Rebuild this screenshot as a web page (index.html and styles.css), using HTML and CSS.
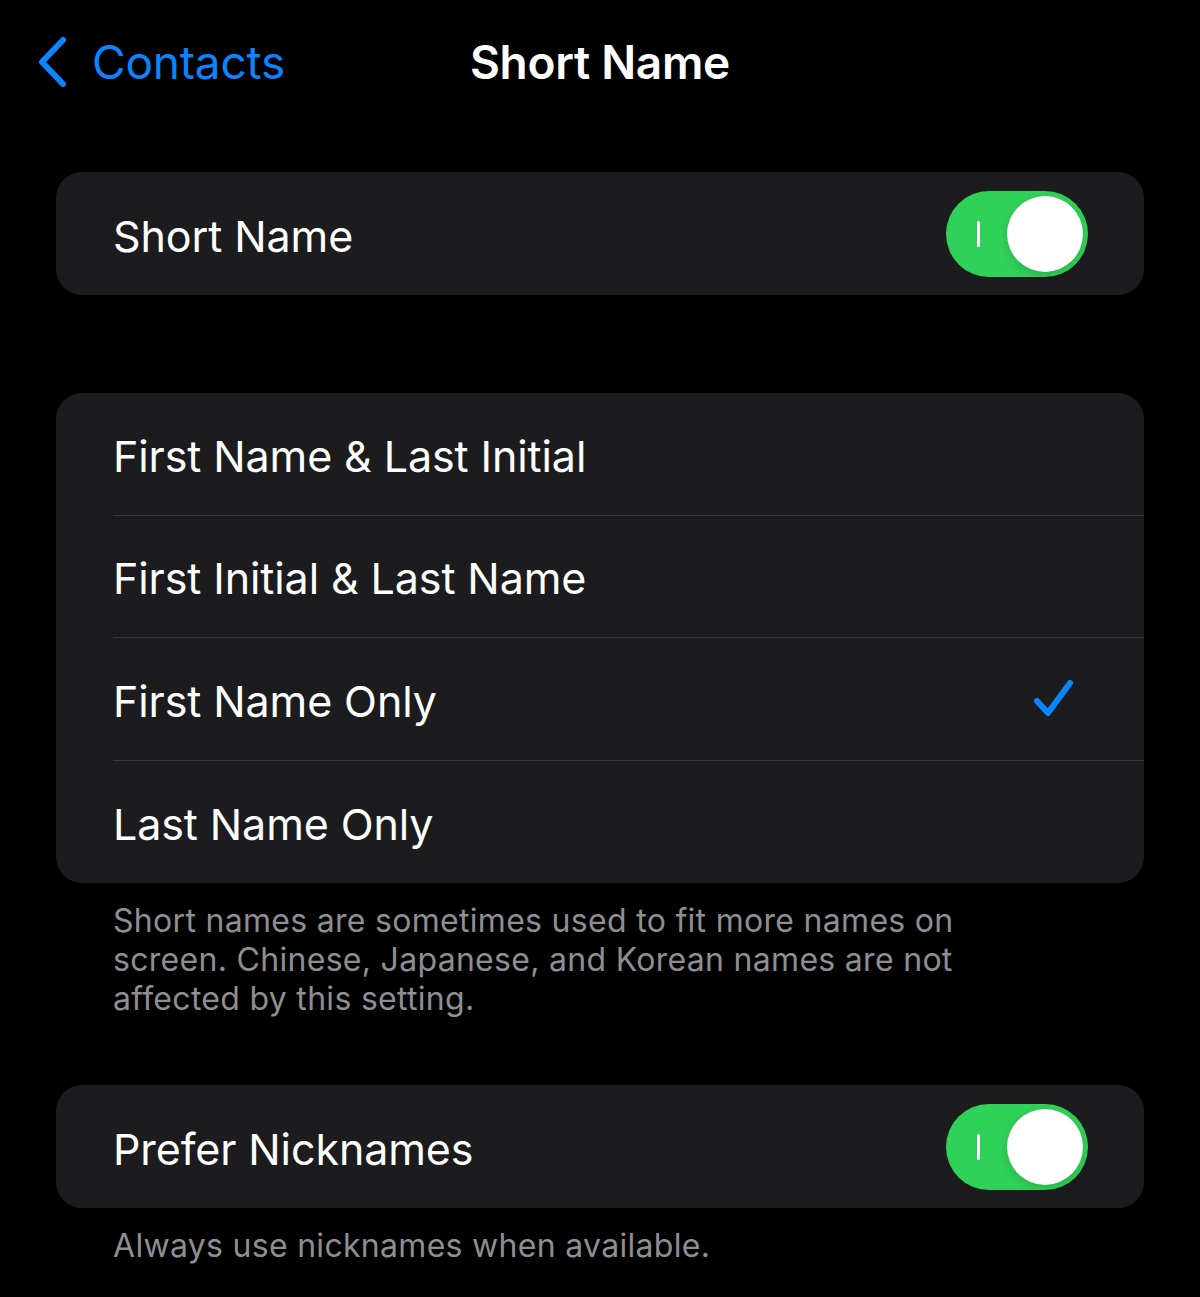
FILE: index.html
```html
<!DOCTYPE html>
<html lang="en">
<head>
<meta charset="utf-8">
<title>Short Name</title>
<link rel="stylesheet" href="styles.css">
</head>
<body>
<header class="nav">
  <a class="back" href="#">
    <svg class="chev" viewBox="0 0 32 52" width="32" height="52" aria-hidden="true">
      <path d="M27 4 L6 26 L27 48" fill="none" stroke="#0a84ff" stroke-width="6" stroke-linecap="round" stroke-linejoin="round"/>
    </svg>
    <span>Contacts</span>
  </a>
  <h1 class="title">Short Name</h1>
</header>

<main class="content">
  <section class="group">
    <div class="row">
      <div class="row-inner">
        <span class="label">Short Name</span>
        <span class="switch on"><span class="switch-mark"></span><span class="knob"></span></span>
      </div>
    </div>
  </section>

  <section class="group group-list">
    <div class="row"><div class="row-inner sep"><span class="label">First Name &amp; Last Initial</span></div></div>
    <div class="row"><div class="row-inner sep"><span class="label">First Initial &amp; Last Name</span></div></div>
    <div class="row"><div class="row-inner sep">
      <span class="label">First Name Only</span>
      <svg class="check" viewBox="0 0 44 42" width="44" height="42" aria-hidden="true">
        <path d="M5 23 L16 35 L38 5" fill="none" stroke="#0a84ff" stroke-width="6" stroke-linecap="round" stroke-linejoin="round"/>
      </svg>
    </div></div>
    <div class="row"><div class="row-inner"><span class="label">Last Name Only</span></div></div>
  </section>
  <p class="footnote">Short names are sometimes used to fit more names on screen. Chinese, Japanese, and Korean names are not affected by this setting.</p>

  <section class="group group-nick">
    <div class="row">
      <div class="row-inner">
        <span class="label">Prefer Nicknames</span>
        <span class="switch on"><span class="switch-mark"></span><span class="knob"></span></span>
      </div>
    </div>
  </section>
  <p class="footnote">Always use nicknames when available.</p>
</main>
</body>
</html>
```

FILE: styles.css
```css
* { box-sizing: border-box; }

html, body {
  margin: 0;
  padding: 0;
  background: #000;
}

body {
  font-family: Inter, "Noto Sans", sans-serif;
  color: #fff;
  width: 1200px;
  height: 1297px;
  overflow: hidden;
}

/* navigation bar */
.nav {
  position: relative;
  height: 124px;
  display: flex;
  align-items: center;
  justify-content: center;
}

.back {
  position: absolute;
  left: 36px;
  top: 36px;
  display: flex;
  align-items: center;
  gap: 24px;
  color: #0a84ff;
  text-decoration: none;
  font-size: 46px;
  letter-spacing: -0.2px;
}

.back span {
  line-height: 52px;
}

.title {
  margin: 0;
  font-size: 46px;
  font-weight: 600;
  letter-spacing: -0.3px;
}

/* grouped lists */
.content {
  padding: 48px 56px 0;
}

.group {
  background: #1c1c1e;
  border-radius: 26px;
  overflow: hidden;
}

.group-list {
  margin-top: 98px;
}

.group-nick {
  margin-top: 67px;
}

.row {
  padding-left: 57px;
}

.row-inner {
  height: 123px;
  padding-right: 56px;
  display: flex;
  align-items: center;
  justify-content: space-between;
}

.group-list .row-inner {
  height: 122.5px;
}

.row-inner.sep {
  border-bottom: 1px solid #38383a;
}

.label {
  font-size: 43px;
  letter-spacing: -0.1px;
  padding-top: 4px;
}

.check {
  margin-right: 12px;
}

/* on/off switch */
.switch {
  position: relative;
  width: 142px;
  height: 86px;
  border-radius: 43px;
  background: #30d158;
  display: block;
}

.switch-mark {
  position: absolute;
  left: 31px;
  top: 30px;
  width: 3px;
  height: 26px;
  border-radius: 2px;
  background: #fff;
}

.knob {
  position: absolute;
  right: 5px;
  top: 5px;
  width: 76px;
  height: 76px;
  border-radius: 50%;
  background: #fff;
  box-shadow: 0 3px 8px rgba(0, 0, 0, 0.15);
}

.footnote {
  margin: 0;
  padding: 18px 70px 0 57px;
  font-size: 32px;
  line-height: 39px;
  color: #8e8e93;
  letter-spacing: 0.3px;
}
```
